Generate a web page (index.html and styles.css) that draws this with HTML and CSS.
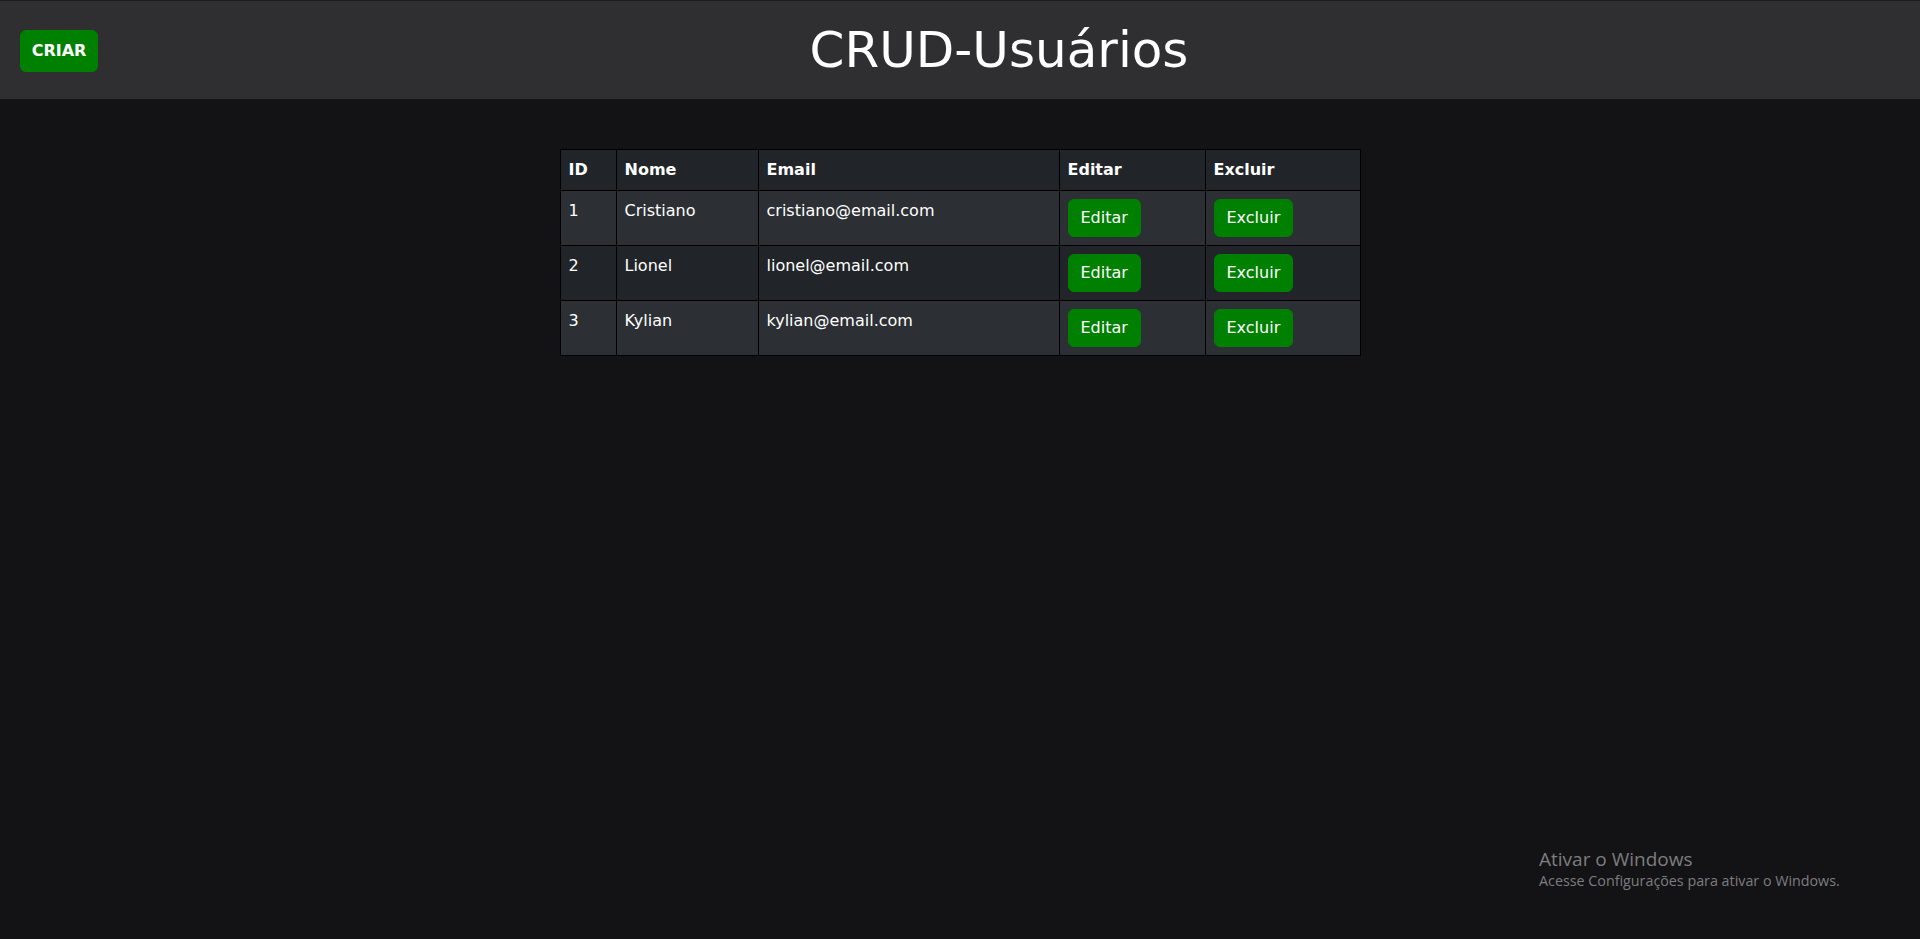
FILE: index.html
```html
<!DOCTYPE html>
<html lang="pt-BR">
<head>
<meta charset="utf-8">
<title>CRUD-Usuários</title>
<link rel="stylesheet" href="styles.css">
</head>
<body>
<header class="topbar">
  <button class="btn btn-criar">CRIAR</button>
  <h1 class="title">CRUD-Usuários</h1>
</header>
<main class="content">
  <table class="users">
    <colgroup>
      <col class="c-id"><col class="c-nome"><col class="c-email"><col class="c-edit"><col class="c-del">
    </colgroup>
    <thead>
      <tr><th>ID</th><th>Nome</th><th>Email</th><th>Editar</th><th>Excluir</th></tr>
    </thead>
    <tbody>
      <tr class="odd"><td>1</td><td>Cristiano</td><td>cristiano@email.com</td><td><button class="btn">Editar</button></td><td><button class="btn">Excluir</button></td></tr>
      <tr><td>2</td><td>Lionel</td><td>lionel@email.com</td><td><button class="btn">Editar</button></td><td><button class="btn">Excluir</button></td></tr>
      <tr class="odd"><td>3</td><td>Kylian</td><td>kylian@email.com</td><td><button class="btn">Editar</button></td><td><button class="btn">Excluir</button></td></tr>
    </tbody>
  </table>
</main>
<div class="watermark">
  <div class="wm-title">Ativar o Windows</div>
  <div class="wm-sub">Acesse Configurações para ativar o Windows.</div>
</div>
</body>
</html>
```
FILE: styles.css
```css
* { box-sizing: border-box; }
html, body { margin: 0; height: 100%; }
body {
  background: #131315;
  color: #fff;
  font-family: "DejaVu Sans", sans-serif;
  font-size: 16px;
  line-height: 1.5;
  overflow: hidden;
}
.topbar {
  height: 99px;
  background: #2f2f31;
  border-top: 1px solid #1c1c1e;
  display: flex;
  align-items: center;
  padding: 0 20px;
}
.title {
  flex: 1;
  margin: 0;
  text-align: center;
  font-size: 50px;
  font-weight: 400;
  line-height: 1.2;
}
.btn {
  background: #008000;
  color: #fff;
  border: 1px solid #008000;
  border-radius: 6px;
  font-family: inherit;
  font-size: 16px;
  line-height: 24px;
  padding: 6px 12px;
  cursor: pointer;
}
.btn-criar {
  font-weight: 700;
  width: 78px;
  height: 42px;
  padding: 0;
  margin-top: 1px;
}
.content {
  display: flex;
  justify-content: center;
  padding-top: 50px;
}
.users {
  width: 800px;
  table-layout: fixed;
  border-collapse: collapse;
  background: #212529;
  border: 1px solid #000;
}
.users th, .users td {
  border: 1px solid #000;
  padding: 8px;
  text-align: left;
  vertical-align: top;
  font-size: 16px;
}
.users th { font-weight: 700; }
.users tr.odd { background: #2c3034; }
.c-id { width: 56px; }
.c-nome { width: 142px; }
.c-email { width: 301px; }
.c-edit { width: 146px; }
.c-del { width: 155px; }
.watermark {
  position: absolute;
  left: 1539px;
  top: 847px;
  color: #7d7d7f;
  font-family: "Open Sans", "Noto Sans", sans-serif;
}
.wm-title { font-size: 19px; line-height: 24px; }
.wm-sub { font-size: 14.3px; line-height: 20px; }
```
